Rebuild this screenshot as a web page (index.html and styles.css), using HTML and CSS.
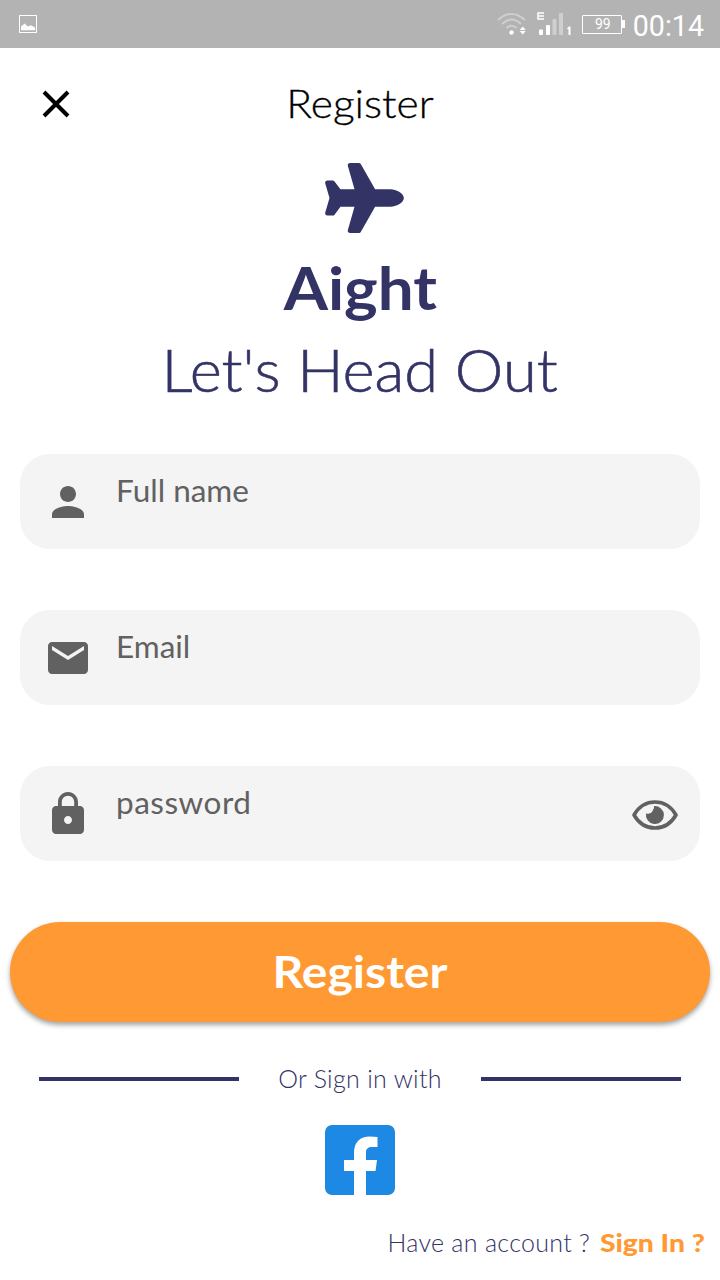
FILE: index.html
```html
<!DOCTYPE html>
<html lang="en">
<head>
<meta charset="utf-8">
<title>Register</title>
<link rel="stylesheet" href="styles.css">
</head>
<body>
<div class="status">
  <svg class="status-picture" width="18" height="18" viewBox="0 0 18 18"><rect x=".5" y=".5" width="17" height="17" fill="none" stroke="#fff"/><path d="M2 15.300V11.500l2-1.500 1.500-1.500L9 11.500l3-1.200 4 2.200v2.800z" fill="#fff"/></svg>
  <svg class="status-wifi" width="30" height="24" viewBox="0 0 30 24" fill="none" stroke="#cfcfcf" stroke-width="2"><path d="M1 8Q14.500-4 28 8M5 12Q14.500 3 24 12M9.500 16Q14.500 11.500 19.500 16"/><circle cx="14.500" cy="20.500" r="2.200" fill="#fff" stroke="none"/><path d="M25.700 14.500l3 3.500h-6zM25.700 22.500l3-3.500h-6z" fill="#fff" stroke="none"/></svg>
  <svg class="status-signal" width="35" height="24" viewBox="0 0 35 24"><path d="M7 1H1v6h6M1 4h6" fill="none" stroke="#fff" stroke-width="1.500"/><g fill="#fff"><rect x="2" y="17.500" width="4" height="5.500" rx="1"/><rect x="9" y="13" width="4" height="10" rx="1"/><path d="M30 16.500l2-2h1.500V23H31.500V17H30z"/></g><g fill="#cfcfcf"><rect x="15.500" y="7" width="4" height="16" rx="1"/><rect x="22" y="1" width="4" height="22" rx="1"/></g></svg>
  <div class="battery">99</div>
  <div class="clock">00:14</div>
</div>
<header class="header">
  <svg class="close" width="28" height="28" viewBox="0 0 28 28"><path d="M2 2l24 24M26 2L2 26" stroke="#000" stroke-width="4"/></svg>
  <h1 class="title">Register</h1>
</header>
<main class="main">
  <svg class="plane" width="79" height="70" viewBox="0 0 576 512"><path fill="#333366" d="M480 192H365.710L260.610 8.060A16.014 16.014 0 0 0 246.710 0h-65.500c-10.630 0-18.300 10.170-15.380 20.390L214.860 192H112l-43.200-57.600c-3.020-4.030-7.770-6.400-12.800-6.400H16.010C5.600 128-2.040 137.780.490 147.880L32 256 .490 364.120C-2.040 374.220 5.600 384 16.010 384H56c5.040 0 9.780-2.370 12.800-6.400L112 320h102.860l-49.030 171.600c-2.920 10.220 4.750 20.400 15.380 20.400h65.500c5.740 0 11.040-3.080 13.890-8.060L365.710 320H480c35.350 0 96-28.650 96-64s-60.650-64-96-64z"/></svg>
  <div class="brand">Aight</div>
  <div class="tagline">Let's Head Out</div>
  <form class="form">
    <label class="field">
      <svg width="48" height="48" viewBox="0 0 24 24"><path d="M12 12c2.210 0 4-1.790 4-4s-1.790-4-4-4-4 1.790-4 4 1.790 4 4 4zm0 2c-2.670 0-8 1.340-8 4v2h16v-2c0-2.660-5.330-4-8-4z"/></svg>
      <span class="label">Full name</span>
    </label>
    <label class="field">
      <svg width="48" height="48" viewBox="0 0 24 24"><path d="M20 4H4c-1.100 0-1.990.900-1.990 2L2 18c0 1.100.900 2 2 2h16c1.100 0 2-.900 2-2V6c0-1.100-.900-2-2-2zm0 4l-8 5-8-5V6l8 5 8-5v2z"/></svg>
      <span class="label">Email</span>
    </label>
    <label class="field">
      <svg width="48" height="48" viewBox="0 0 24 24"><path d="M18 8h-1V6c0-2.760-2.240-5-5-5S7 3.240 7 6v2H6c-1.100 0-2 .900-2 2v10c0 1.100.900 2 2 2h12c1.100 0 2-.900 2-2V10c0-1.100-.900-2-2-2zm-6 9c-1.100 0-2-.900-2-2s.900-2 2-2 2 .900 2 2-.900 2-2 2zm3.100-9H8.900V6c0-1.710 1.390-3.100 3.100-3.100 1.710 0 3.100 1.390 3.100 3.100v2z"/></svg>
      <span class="label password">password</span>
      <svg class="eye" width="46" height="30" viewBox="0 0 46 30"><path d="M2 15C12-2.300 34-2.300 44 15C34 32.300 12 32.300 2 15z" fill="none" stroke="#616161" stroke-width="3.600" stroke-linejoin="round"/><path d="M22 6.100A9 9 0 1 1 14.100 13.200A4.800 4.800 0 0 0 20.800 10.500A5 5 0 0 0 22 6.100z"/></svg>
    </label>
    <button class="submit" type="button"><span class="submit-text">Register</span></button>
  </form>
  <div class="divider"><i class="line"></i><span class="or">Or Sign in with</span><i class="line"></i></div>
  <svg class="facebook" width="70" height="70" viewBox="0 0 70 70"><rect width="70" height="70" rx="7" fill="#1e88e5"/><path fill="#fff" d="M29 70V46H19V35h10v-7C29 17 35 11.500 45 11.500Q49 11.500 52.500 12v10H47C43 22 41 24 41 27v8h11l-1.500 11H41v24z"/></svg>
</main>
<footer class="footer"><span class="have">Have an account ?</span><a class="signin">Sign In ?</a></footer>
</body>
</html>
```
FILE: styles.css
```css
* { box-sizing: border-box; }
body {
  margin: 0;
  width: 720px;
  height: 1280px;
  overflow: hidden;
  background: #fff;
  color: #333366;
  font-family: Lato, "Noto Sans", sans-serif;
  display: flex;
  flex-direction: column;
}
svg { display: block; flex: none; }
.status {
  height: 48px;
  flex: none;
  background: #b3b3b3;
  color: #fff;
  display: flex;
  align-items: center;
  padding: 0 16px 0 19px;
}
.status-wifi { margin-left: auto; }
.status-signal { margin-left: 10px; }
.battery {
  position: relative;
  width: 40px;
  height: 19px;
  margin-left: 10px;
  border: 1.5px solid #fff;
  border-radius: 1px;
  font: 14px/17px Roboto, sans-serif;
  text-align: center;
  padding-left: 2px;
}
.battery::after {
  content: "";
  position: absolute;
  right: -4px;
  top: 4px;
  width: 3px;
  height: 8px;
  background: #fff;
}
.clock { margin-left: 11px; font: 28.6px/48px Roboto, sans-serif; padding-top: 3px; }
.header {
  height: 108px;
  flex: none;
  display: grid;
  grid-template-columns: 28px 1fr 28px;
  align-items: center;
  padding: 0 42px;
}
.close { margin-top: 2px; }
.title {
  margin: 0;
  color: #000;
  font-size: 39.5px;
  font-weight: 300;
  line-height: 110px;
  text-align: center;
  transform: scaleX(1.075);
  -webkit-text-stroke: .3px #000;
}
.main { display: flex; flex-direction: column; align-items: center; }
.plane { margin: 7px 0 13px 9px; }
.brand {
  font-size: 58.5px;
  font-weight: 700;
  line-height: 83px;
  transform: scaleX(1.09);
}
.tagline {
  font-size: 58.5px;
  font-weight: 300;
  line-height: 80px;
  transform: scaleX(1.05);
  -webkit-text-stroke: .6px #333366;
}
.form {
  width: 700px;
  margin-top: 45px;
  display: grid;
  row-gap: 61px;
}
.field {
  height: 95px;
  margin: 0 10px;
  padding: 0 22.5px 0 24px;
  display: flex;
  align-items: center;
  background: #f4f4f4;
  border-radius: 30px;
  color: #616161;
  fill: #616161;
}
.label {
  align-self: flex-start;
  margin-left: 24px;
  font-size: 31.5px;
  line-height: 73px;
}
.password { letter-spacing: .5px; }
.eye { margin: 3px 0 0 auto; }
.submit {
  height: 100px;
  border: 0;
  border-radius: 50px;
  padding: 0 0 3px;
  background: #ff9933;
  color: #fff;
  font: 700 44.5px Lato, sans-serif;
  box-shadow: 0 3px 5px rgba(0, 0, 0, .36);
}
.submit-text { display: inline-block; transform: scaleX(1.08); }
.divider {
  width: 642px;
  height: 30px;
  margin-top: 42px;
  display: flex;
  align-items: center;
  justify-content: space-between;
}
.line { width: 200px; height: 4px; background: #333366; }
.or { font-size: 25px; font-weight: 300; letter-spacing: .3px; line-height: 28px; padding-bottom: 2px; }
.facebook { margin-top: 31px; }
.footer {
  margin-top: 27px;
  padding-right: 15px;
  display: flex;
  justify-content: flex-end;
  gap: 22px;
  font-size: 25px;
  line-height: 40px;
}
.have { font-weight: 300; letter-spacing: .3px; }
.signin {
  color: #ff9933;
  font-weight: 900;
  transform: scaleX(1.13);
  transform-origin: right center;
}
```
